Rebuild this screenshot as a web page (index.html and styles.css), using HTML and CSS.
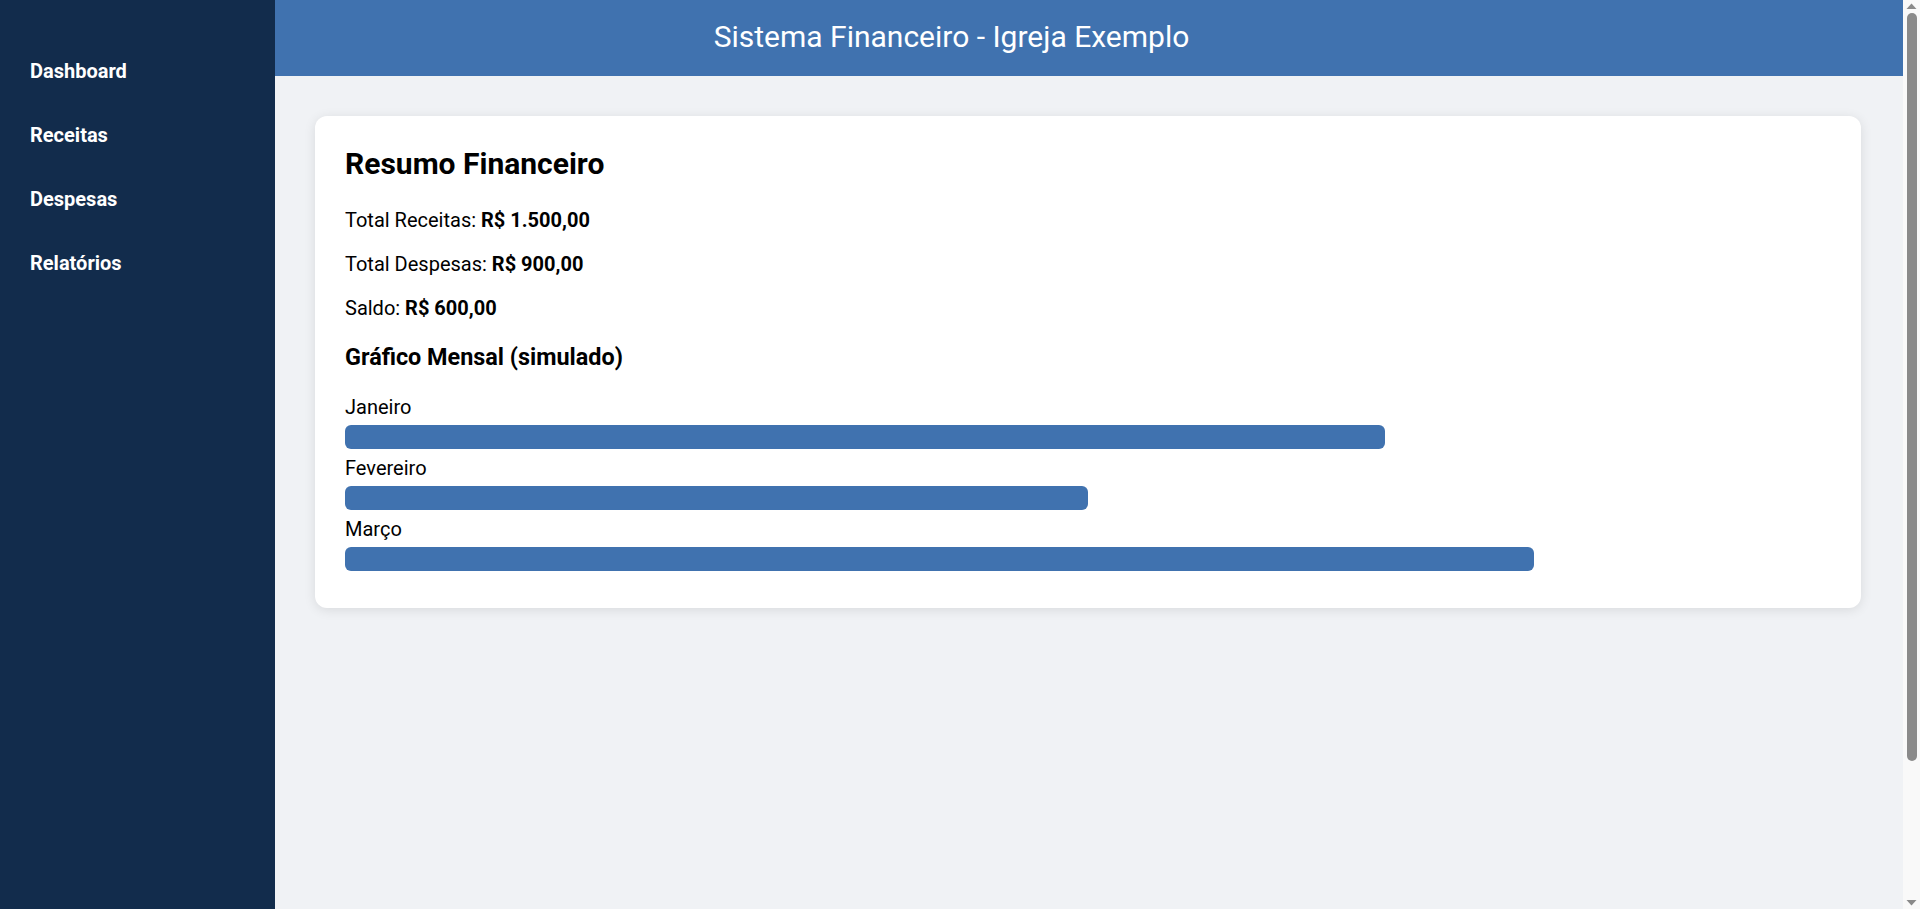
FILE: index.html
```html
<!DOCTYPE html>
<html lang="pt-BR">
<head>
<meta charset="utf-8">
<title>Sistema Financeiro - Igreja Exemplo</title>
<link rel="stylesheet" href="styles.css">
</head>
<body>
<div class="layout">
  <header class="topbar">
    <h1 class="topbar-title">Sistema Financeiro - Igreja Exemplo</h1>
  </header>
  <nav class="sidebar">
    <a class="nav-item" href="#">Dashboard</a>
    <a class="nav-item" href="#">Receitas</a>
    <a class="nav-item" href="#">Despesas</a>
    <a class="nav-item" href="#">Relatórios</a>
  </nav>
  <main class="main">
    <section class="card">
      <h2 class="card-title">Resumo Financeiro</h2>
      <p class="stat">Total Receitas: <strong>R$ 1.500,00</strong></p>
      <p class="stat">Total Despesas: <strong>R$ 900,00</strong></p>
      <p class="stat">Saldo: <strong>R$ 600,00</strong></p>
      <h3 class="chart-title">Gráfico Mensal (simulado)</h3>
      <div class="chart">
        <div class="chart-label">Janeiro</div>
        <div class="chart-bar" style="width: 70%"></div>
        <div class="chart-label">Fevereiro</div>
        <div class="chart-bar" style="width: 50%"></div>
        <div class="chart-label">Março</div>
        <div class="chart-bar" style="width: 80%"></div>
      </div>
    </section>
  </main>
</div>
<div class="scrollbar" aria-hidden="true">
  <svg class="scroll-arrow" width="17" height="12" viewBox="0 0 17 12"><path d="M3.5 9 L8.5 3.5 L13.5 9 Z" fill="#8a8a8a"/></svg>
  <div class="scroll-thumb"></div>
  <div class="scroll-track"></div>
  <svg class="scroll-arrow" width="17" height="12" viewBox="0 0 17 12"><path d="M3.5 3 L8.5 8.5 L13.5 3 Z" fill="#8a8a8a"/></svg>
</div>
</body>
</html>
```
FILE: styles.css
```css
* {
  box-sizing: border-box;
}

html, body {
  margin: 0;
  padding: 0;
}

body {
  font-family: Roboto, "Liberation Sans", Arial, sans-serif;
  font-size: 20px;
  line-height: 1.2;
  color: #000;
  background: #f0f2f5;
  display: flex;
  height: 100vh;
  overflow: hidden;
}

.layout {
  flex: 1;
  display: grid;
  grid-template-columns: 275px 1fr;
  grid-template-rows: 76px 1fr;
  min-width: 0;
}

.topbar {
  grid-column: 1 / -1;
  grid-row: 1;
  background: #4072af;
  color: #fff;
  display: flex;
  align-items: center;
  justify-content: center;
  padding-bottom: 3px;
}

.topbar-title {
  margin: 0;
  font-size: 30px;
  font-weight: 400;
  line-height: normal;
}

.sidebar {
  grid-column: 1;
  grid-row: 1 / -1;
  z-index: 1;
  background: #122c4c;
  padding: 39px 0;
  display: flex;
  flex-direction: column;
}

.nav-item {
  display: block;
  padding: 20px 30px;
  color: #fff;
  text-decoration: none;
  font-weight: 700;
  font-size: 20px;
  line-height: 24px;
}

.main {
  grid-column: 2;
  grid-row: 2;
  padding: 40px 42px 40px 40px;
}

.card {
  background: #fff;
  border-radius: 12px;
  padding: 30px;
  box-shadow: 0 2px 12px rgba(0, 0, 0, 0.1);
}

.card-title {
  margin: 0 0 26px;
  font-size: 30px;
  font-weight: 700;
  line-height: 36px;
}

.stat {
  margin: 20px 0;
}

.chart-title {
  margin: 23px 0 24px;
  font-size: 23.4px;
  font-weight: 700;
  line-height: 1.2;
}

.chart-label {
  line-height: 24px;
}

.chart-bar {
  height: 24px;
  margin: 6px 0 7px;
  background: #4072af;
  border-radius: 6px;
}

/* window scrollbar as seen in the reference */
.scrollbar {
  flex: 0 0 17px;
  width: 17px;
  background: #f9f9f9;
  display: flex;
  flex-direction: column;
  align-items: center;
}

.scroll-arrow {
  flex: 0 0 12px;
  display: block;
}

.scroll-thumb {
  flex: 0 0 748px;
  width: 10px;
  margin-top: 1px;
  background: #8a8a8a;
  border-radius: 5px;
}

.scroll-track {
  flex: 1;
}
```
